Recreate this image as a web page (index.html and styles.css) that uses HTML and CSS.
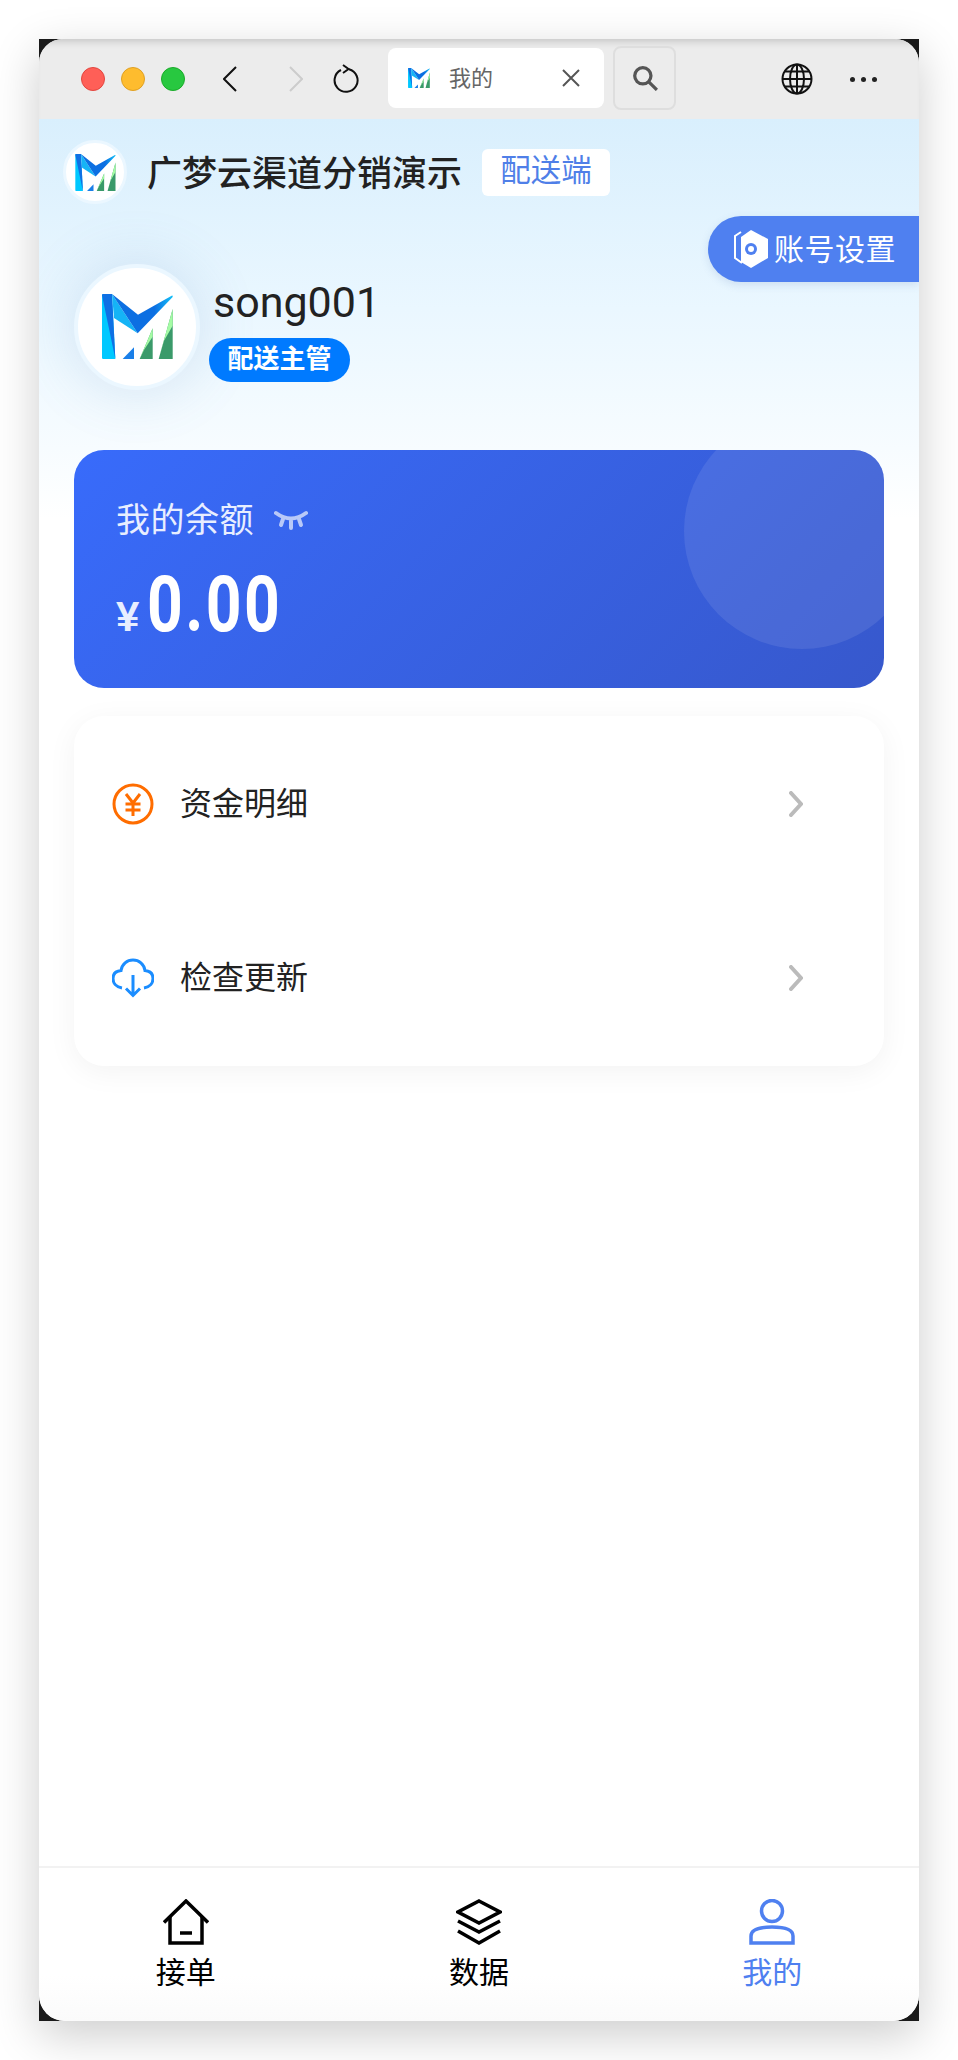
FILE: index.html
```html
<!DOCTYPE html>
<html lang="zh-CN">
<head>
    <meta charset="UTF-8">
    <meta name="viewport" content="width=device-width, initial-scale=1.0">
    <title>我的</title>
    <link rel="stylesheet" href="styles.css">
</head>
<body>
    <svg class="defs" width="0" height="0">
        <defs>
            <linearGradient id="wing" x1="0" y1="0" x2="1" y2="0">
                <stop offset="0" stop-color="#0c6fe2"/>
                <stop offset="0.7" stop-color="#0c6fe2"/>
                <stop offset="1" stop-color="#12c0f8"/>
            </linearGradient>
            <symbol id="logo" viewBox="0 0 213 195">
                <path d="M0 4Q0 0 4 0H30L40 195H4Q0 195 0 191Z" fill="#00c8ff"/>
                <path d="M0 4Q0 0 4 0H30L40 195Z" fill="#0f70e4"/>
                <path d="M30 0L107 118L36 72Z" fill="#15b4f6"/>
                <path d="M30 0L108 62L209 5Q213 4 212 9L107 118Z" fill="url(#wing)"/>
                <path d="M62 195L96 160V195Z" fill="#1a7fe8"/>
                <path d="M113 195L152 103V195Z" fill="#3a9a6a"/>
                <path d="M113 195L152 103V128L126 168Z" fill="#a4fba4"/>
                <path d="M170 195L212 45V195Z" fill="#3a9a6a"/>
                <path d="M170 195L212 45V95L186 140Z" fill="#a4fba4"/>
            </symbol>
        </defs>
    </svg>

    <div class="window">
        <div class="window-inner">
            <div class="toolbar">
                <div class="lights">
                    <span class="light red"></span>
                    <span class="light yellow"></span>
                    <span class="light green"></span>
                </div>
                <svg class="nav-icon back" viewBox="0 0 14 26"><path d="M13 1L1 13L13 25"/></svg>
                <svg class="nav-icon forward" viewBox="0 0 14 26"><path d="M1 1L13 13L1 25"/></svg>
                <svg class="nav-icon reload" viewBox="0 0 28 30"><path d="M17 5.200A11.500 11.500 0 1 1 9 6"/><path d="M11 1L16.500 5L11 9"/></svg>
                <div class="tab">
                    <svg class="tab-logo"><use href="#logo"/></svg>
                    <span class="tab-title">我的</span>
                    <svg class="tab-close" viewBox="0 0 18 18"><path d="M1 1L17 17M17 1L1 17"/></svg>
                </div>
                <div class="search-btn">
                    <svg viewBox="0 0 24 24"><circle cx="10" cy="10" r="7.500"/><path d="M15.500 15.500L23 23"/></svg>
                </div>
                <svg class="globe" viewBox="0 0 32 32"><circle cx="16" cy="16" r="14.500"/><ellipse cx="16" cy="16" rx="7" ry="14.500"/><path d="M16 1.500V30.500M1.500 16H30.500M4 8.500H28M4 23.500H28"/></svg>
                <div class="more"><span></span><span></span><span></span></div>
            </div>

            <div class="page">
                <div class="hero">
                    <div class="app-header">
                        <div class="app-logo"><svg><use href="#logo"/></svg></div>
                        <div class="app-name">广梦云渠道分销演示</div>
                        <div class="app-tag">配送端</div>
                    </div>
                    <div class="settings-btn">
                        <svg viewBox="0 0 36 40"><path class="hex-line" d="M8 3L2 7V29L9 34"/><path class="hex-fill" d="M18 1L35 10V29L18 39L8 33V8Z"/><circle class="hex-hole" cx="18" cy="20" r="6"/><circle class="hex-dot" cx="18" cy="20" r="3"/></svg>
                        <span>账号设置</span>
                    </div>
                    <div class="profile">
                        <div class="avatar"><svg><use href="#logo"/></svg></div>
                        <div class="profile-info">
                            <div class="username">song001</div>
                            <div class="role">配送主管</div>
                        </div>
                    </div>
                </div>

                <div class="balance-card">
                    <div class="balance-circle"></div>
                    <div class="balance-label">
                        <span>我的余额</span>
                        <svg viewBox="0 0 34 20"><path d="M2 3Q17 14 32 3"/><path d="M9 9L7 15M17 11V18M25 9L27 15"/></svg>
                    </div>
                    <div class="balance-amount"><span class="currency">¥</span><span class="amount">0.00</span></div>
                </div>

                <div class="menu-card">
                    <div class="menu-row">
                        <svg class="menu-icon" viewBox="0 0 42 42"><circle class="yuan-ring" cx="21" cy="21" r="19"/><path class="yuan" d="M14 11L21 20L28 11M13.500 21H28.500M13.500 27H28.500M21 20V33"/></svg>
                        <span class="menu-text">资金明细</span>
                        <svg class="menu-arrow" viewBox="0 0 14 26"><path d="M2 2L12 13L2 24"/></svg>
                    </div>
                    <div class="menu-row">
                        <svg class="menu-icon" viewBox="0 0 42 38"><path class="cloud" d="M10 29C4 28 1 24 1 19.500C1 15 4 12 9 11.500C10 5 15 1 21 1C27 1 32 5 33 11.500C38 12 41 15 41 19.500C41 24 38 28 32 29"/><path class="cloud" d="M21 16V36M14 29.500L21 36.500L28 29.500"/></svg>
                        <span class="menu-text">检查更新</span>
                        <svg class="menu-arrow" viewBox="0 0 14 26"><path d="M2 2L12 13L2 24"/></svg>
                    </div>
                </div>
            </div>

            <div class="tabbar">
                <div class="tabbar-item">
                    <svg viewBox="0 0 46 46"><path d="M1 23.500L23 2L45 23.500"/><path d="M7 18V44H39V18"/><path d="M17 34H29"/></svg>
                    <span>接单</span>
                </div>
                <div class="tabbar-item">
                    <svg viewBox="0 0 46 46"><path d="M23 2L44 13L23 24L2 13Z"/><path d="M2 22L23 33L44 22"/><path d="M2 32L23 44L44 32"/></svg>
                    <span>数据</span>
                </div>
                <div class="tabbar-item active">
                    <svg viewBox="0 0 46 46"><circle cx="23" cy="12" r="10.500"/><path d="M2 44V37C2 31 10 28 23 28C36 28 44 31 44 37V44Z"/></svg>
                    <span>我的</span>
                </div>
            </div>
        </div>
    </div>
</body>
</html>
```

FILE: styles.css
```css
* {
    margin: 0;
    padding: 0;
    box-sizing: border-box;
}

body {
    font-family: Roboto, "Noto Sans CJK SC", sans-serif;
    background: #fff;
    color: #222;
    height: 2060px;
    padding: 39px;
    overflow: hidden;
}

.defs {
    position: absolute;
}

.window {
    width: 880px;
    height: 1982px;
    background: #1a1a1a;
    box-shadow: 0 14px 44px rgba(0, 0, 0, 0.2);
}

.window-inner {
    height: 100%;
    background: #fff;
    border-radius: 24px 24px 26px 26px;
    display: flex;
    flex-direction: column;
    overflow: hidden;
}

/* browser chrome */
.toolbar {
    height: 80px;
    background: #ececec;
    display: flex;
    align-items: center;
    flex-shrink: 0;
    padding-left: 42px;
    box-shadow: inset 0 8px 8px -6px rgba(0, 0, 0, 0.18);
}

.lights {
    display: flex;
    gap: 16px;
}

.light {
    width: 24px;
    height: 24px;
    border-radius: 50%;
}

.red { background: #ff5f57; border: 1px solid #e2463f; }
.yellow { background: #febc2e; border: 1px solid #dfa023; }
.green { background: #28c840; border: 1px solid #1aab29; }

.nav-icon {
    fill: none;
    stroke: #111;
    stroke-width: 2;
    height: 26px;
    width: 14px;
}

.back {
    margin-left: 38px;
}

.forward {
    margin-left: 52px;
    stroke: #ccc;
}

.reload {
    margin-left: 29px;
    width: 28px;
    height: 30px;
}

.tab {
    width: 216px;
    height: 60px;
    margin: -2px 0 0 28px;
    background: #fff;
    border-radius: 8px;
    display: flex;
    align-items: center;
    padding-left: 20px;
}

.tab-logo {
    width: 22px;
    height: 20px;
}

.tab-title {
    font-size: 22px;
    color: #666;
    margin-left: 19px;
    padding-bottom: 5px;
}

.tab-close {
    width: 18px;
    height: 18px;
    margin-left: 69px;
    fill: none;
    stroke: #555;
    stroke-width: 2;
}

.search-btn {
    width: 63px;
    height: 64px;
    margin: -2px 0 0 9px;
    border: 2px solid #dedede;
    border-radius: 8px;
    display: flex;
    align-items: center;
    justify-content: center;
}

.search-btn svg {
    width: 26px;
    height: 26px;
    fill: none;
    stroke: #555;
    stroke-width: 3;
}

.globe {
    width: 32px;
    height: 32px;
    margin-left: 105px;
    fill: none;
    stroke: #111;
    stroke-width: 2;
}

.more {
    display: flex;
    gap: 6px;
    margin-left: 37px;
}

.more span {
    width: 5px;
    height: 5px;
    border-radius: 50%;
    background: #222;
}

/* page */
.page {
    flex: 1;
    background: linear-gradient(180deg, #d9effd 0, #eaf7ff 190px, #f7fcff 330px, #fff 400px);
}

.hero {
    position: relative;
}

.app-header {
    display: flex;
    align-items: center;
    padding: 21px 0 0 24px;
}

.app-logo {
    width: 64px;
    height: 64px;
    background: #fff;
    border: 3px solid #ebf7ff;
    border-radius: 50%;
    display: flex;
    align-items: center;
    justify-content: center;
}

.app-logo svg {
    width: 41px;
    height: 37px;
}

.app-name {
    font-size: 35px;
    font-weight: 500;
    margin-left: 20px;
    padding-bottom: 4px;
    color: #222;
}

.app-tag {
    margin-left: 20px;
    width: 128px;
    height: 47px;
    background: #fff;
    border-radius: 6px;
    color: #4f7fe8;
    font-size: 30.500px;
    line-height: 43px;
    text-align: center;
}

.settings-btn {
    position: absolute;
    right: 0;
    top: 97px;
    width: 211px;
    height: 66px;
    background: #4f80f0;
    border-radius: 33px 0 0 33px;
    display: flex;
    align-items: center;
    padding-left: 25px;
    color: #fff;
    font-size: 30px;
    letter-spacing: 0.500px;
    box-shadow: 0 3px 8px rgba(60, 100, 170, 0.15);
}

.settings-btn span {
    padding-bottom: 4px;
}

.settings-btn svg {
    width: 36px;
    height: 40px;
    margin-right: 5px;
}

.hex-line {
    fill: none;
    stroke: #fff;
    stroke-width: 2;
}

.hex-fill { fill: #fff; }
.hex-hole { fill: #4f80f0; }
.hex-dot { fill: #fff; }

.profile {
    display: flex;
    margin: 60px 0 0 35px;
}

.avatar {
    width: 126px;
    height: 126px;
    background: #fff;
    border: 4px solid #ebf7ff;
    border-radius: 50%;
    display: flex;
    align-items: center;
    justify-content: center;
    box-shadow: 0 0 60px rgba(90, 140, 190, 0.2);
    flex-shrink: 0;
}

.avatar svg {
    width: 71px;
    height: 65px;
    margin-bottom: 2px;
}

.profile-info {
    margin-left: 9px;
    padding-top: 10px;
}

.username {
    font-size: 43px;
    line-height: 56px;
    padding-left: 4px;
    color: #222;
}

.role {
    width: 141px;
    height: 44px;
    margin-top: 8px;
    background: #007aff;
    border-radius: 22px;
    color: #fff;
    font-size: 26px;
    font-weight: 700;
    line-height: 43px;
    text-align: center;
}

.balance-card {
    position: relative;
    height: 238px;
    margin: 60px 35px 0;
    border-radius: 30px;
    background: linear-gradient(135deg, #386bfb, #3758cc);
    overflow: hidden;
    padding: 48px 0 0 42px;
    color: #fff;
}

.balance-circle {
    position: absolute;
    left: 610px;
    top: -37px;
    width: 236px;
    height: 236px;
    border-radius: 50%;
    background: rgba(255, 255, 255, 0.09);
}

.balance-label {
    display: flex;
    align-items: center;
    font-size: 34px;
    line-height: 44px;
    letter-spacing: 0.500px;
    color: #e8eeff;
}

.balance-label svg {
    width: 34px;
    height: 20px;
    margin-left: 20px;
    fill: none;
    stroke: #b9c9f8;
    stroke-width: 4;
    stroke-linecap: round;
}

.balance-amount {
    display: flex;
    align-items: baseline;
    margin-top: 21px;
}

.currency {
    font-family: "Liberation Sans", sans-serif;
    font-size: 42px;
    font-weight: 700;
    color: #e8eeff;
}

.amount {
    font-size: 78px;
    font-weight: 700;
    line-height: 84px;
    letter-spacing: 3px;
    margin-left: 8px;
    transform: scaleX(0.8);
    transform-origin: left;
}

.menu-card {
    margin: 28px 35px 0;
    background: #fff;
    border-radius: 30px;
    padding: 1px 0;
    box-shadow: 0 6px 30px rgba(0, 0, 0, 0.05);
}

.menu-row {
    height: 174px;
    display: flex;
    align-items: center;
    padding-left: 38px;
}

.menu-icon {
    width: 42px;
    height: 42px;
}

.yuan-ring {
    fill: none;
    stroke: #ff6d00;
    stroke-width: 3;
}

.yuan {
    fill: none;
    stroke: #ff6d00;
    stroke-width: 3;
}

.cloud {
    fill: none;
    stroke: #1b8dff;
    stroke-width: 3;
}

.menu-text {
    font-size: 32px;
    margin-left: 26px;
    padding-bottom: 7px;
    color: #222;
}

.menu-arrow {
    width: 14px;
    height: 26px;
    margin-left: 481px;
    fill: none;
    stroke: #bbb;
    stroke-width: 4;
    stroke-linecap: round;
}

/* bottom tabs */
.tabbar {
    height: 155px;
    flex-shrink: 0;
    border-top: 2px solid #f2f2f2;
    display: flex;
    background: linear-gradient(180deg, #fff 70%, #fbfbfb);
}

.tabbar-item {
    flex: 1;
    display: flex;
    flex-direction: column;
    align-items: center;
    padding-top: 31px;
    color: #000;
    font-size: 30px;
    line-height: 36px;
}

.tabbar-item svg {
    width: 46px;
    height: 46px;
    margin-bottom: 10px;
    fill: none;
    stroke: #000;
    stroke-width: 3.500;
}

.tabbar-item.active {
    color: #4f80f0;
}

.tabbar-item.active svg {
    stroke: #4f80f0;
}
```
